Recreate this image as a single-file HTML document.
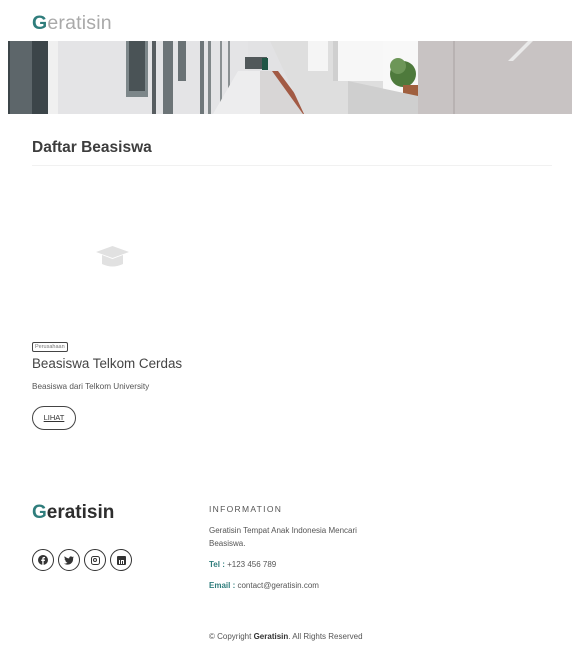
<!DOCTYPE html>
<html><head><style>
*{margin:0;padding:0;box-sizing:border-box}
body{width:584px;height:655px;background:#fff;font-family:"Liberation Sans",sans-serif;position:relative;overflow:hidden;color:#333}
.a{position:absolute}
.t{color:#2f7d7c}
</style></head><body>
<div class="a" style="left:32px;top:12px;font-size:19.5px;color:#a9a9a9;letter-spacing:0.2px"><span class="t" style="font-weight:bold">G</span>eratisin</div>
<div class="a" style="left:8px;top:41px;width:564px;height:73px;overflow:hidden;background:#dcdcdc">
 <svg width="564" height="73" viewBox="0 0 564 73">
  <rect width="564" height="73" fill="#e2e2e4"/>
  <rect x="0" y="0" width="40" height="73" fill="#3c4549"/>
  <rect x="2" y="0" width="22" height="73" fill="#5d666a"/>
  <rect x="40" y="0" width="10" height="73" fill="#f0f0f0"/>
  <rect x="50" y="0" width="190" height="73" fill="#e4e4e6"/>
  <rect x="118" y="0" width="22" height="56" fill="#7d878a"/>
  <rect x="121" y="0" width="16" height="50" fill="#4a5356"/>
  <rect x="144" y="0" width="4" height="73" fill="#575d60"/>
  <rect x="155" y="0" width="10" height="73" fill="#6c7477"/>
  <rect x="170" y="0" width="8" height="40" fill="#6a7275"/>
  <rect x="192" y="0" width="4" height="73" fill="#6e7679"/>
  <rect x="200" y="0" width="3" height="73" fill="#808789"/>
  <rect x="212" y="0" width="2" height="73" fill="#8a9092"/>
  <rect x="220" y="0" width="2" height="60" fill="#8a9092"/>
  <polygon points="230,30 252,30 252,73 205,73" fill="#ededee"/>
  <rect x="237" y="16" width="22" height="12" fill="#51585a"/>
  <rect x="254" y="17" width="6" height="12" fill="#1f5545"/>
  <polygon points="252,30 268,30 300,73 252,73" fill="#d8d6d6"/>
  <polygon points="264,30 270,30 302,73 295,73" fill="#a25a44"/>
  <polygon points="262,0 370,0 410,73 296,73" fill="#dedede"/>
  <rect x="300" y="0" width="20" height="30" fill="#f5f5f5"/>
  <rect x="330" y="0" width="45" height="40" fill="#f7f7f7"/>
  <rect x="325" y="0" width="5" height="40" fill="#cfcfcf"/>
  <rect x="375" y="0" width="35" height="55" fill="#f8f8f8"/>
  <circle cx="395" cy="33" r="13" fill="#4e7a3c"/>
  <circle cx="390" cy="25" r="8" fill="#6d9658"/>
  <rect x="395" y="44" width="15" height="12" fill="#a0603f"/>
  <polygon points="340,40 410,55 410,73 340,73" fill="#cfcfcf"/>
  <rect x="410" y="0" width="154" height="73" fill="#c8c3c3"/>
  <rect x="445" y="0" width="2" height="73" fill="#b8b2b2"/>
  <polygon points="500,20 520,0 525,0 505,20" fill="#eaeaea"/>
 </svg>
</div>
<div class="a" style="left:32px;top:139px;font-size:15.5px;font-weight:bold;color:#3d3d3d">Daftar Beasiswa</div>
<div class="a" style="left:32px;top:165px;width:520px;height:1px;background:#f1f1f1"></div>
<svg class="a" style="left:96px;top:246px" width="33" height="22" viewBox="0 0 33 22"><polygon points="16.5,0 33,6 16.5,12 0,6" fill="#e1e1e1"/><path d="M6 9 L6 18 Q16.5 23 27 18 L27 9 L16.5 13 Z" fill="#e1e1e1"/></svg>
<div class="a" style="left:32px;top:342px;border:1px solid #444;border-radius:2px;font-size:5.5px;padding:1px 2px;color:#777">Perusahaan</div>
<div class="a" style="left:32px;top:356px;font-size:13.4px;color:#444">Beasiswa Telkom Cerdas</div>
<div class="a" style="left:32px;top:382px;font-size:8.2px;color:#555">Beasiswa dari Telkom University</div>
<div class="a" style="left:32px;top:406px;width:44px;height:24px;border:1px solid #444;border-radius:12px;font-size:7.5px;text-align:center;line-height:22px;text-decoration:underline;color:#333">LIHAT</div>
<div class="a" style="left:32px;top:502px;font-size:19px;font-weight:bold;color:#2e2e2e"><span class="t">G</span>eratisin</div>
<div class="a" style="left:32px;top:549px;display:flex;gap:4px">
 <div style="width:22px;height:22px;border:1.3px solid #333;border-radius:50%;display:flex;align-items:center;justify-content:center"><svg width="10" height="10" viewBox="0 0 10 10"><circle cx="5" cy="5" r="5" fill="#333"/><path d="M5.6 10 V6 H6.8 L7 4.6 H5.6 V3.8 C5.6 3.4 5.8 3.2 6.2 3.2 H7 V2 H5.9 C4.8 2 4.3 2.6 4.3 3.6 V4.6 H3.2 V6 H4.3 V10 Z" fill="#fff"/></svg></div>
 <div style="width:22px;height:22px;border:1.3px solid #333;border-radius:50%;display:flex;align-items:center;justify-content:center"><svg width="10" height="9" viewBox="0 0 10 9"><path d="M10 1 L8.7 1.6 L9.7 0.4 L8.2 1 C7 -0.2 5 0.6 5.2 2.4 C3.3 2.3 1.8 1.4 0.7 0.2 C0.1 1.4 0.6 2.7 1.4 3.2 L0.6 3 C0.7 4.2 1.5 4.8 2.4 5.1 L1.5 5.1 C1.8 6 2.7 6.5 3.5 6.6 C2.5 7.4 1.2 7.8 0 7.6 C4.6 10.3 9.6 7.5 9.1 2 Z" fill="#333"/></svg></div>
 <div style="width:22px;height:22px;border:1.3px solid #333;border-radius:50%;display:flex;align-items:center;justify-content:center"><div style="width:9px;height:9px;border:1.3px solid #333;border-radius:2.5px;display:flex;align-items:center;justify-content:center"><div style="width:4px;height:4px;border:1px solid #333;border-radius:50%"></div></div></div>
 <div style="width:22px;height:22px;border:1.3px solid #333;border-radius:50%;display:flex;align-items:center;justify-content:center"><div style="width:9px;height:9px;background:#333;border-radius:1px;position:relative"><div style="position:absolute;left:2px;top:4px;width:1px;height:4px;background:#fff"></div><div style="position:absolute;left:4px;top:4px;width:3px;height:4px;border:1px solid #fff;border-bottom:none"></div></div></div>
</div>
<div class="a" style="left:209px;top:504px;font-size:8.5px;letter-spacing:1.3px;color:#555">INFORMATION</div>
<div class="a" style="left:209px;top:524px;font-size:8px;line-height:13px;color:#555;width:175px">Geratisin Tempat Anak Indonesia Mencari Beasiswa.</div>
<div class="a" style="left:209px;top:560px;font-size:8px;color:#555"><b class="t">Tel :</b> +123 456 789</div>
<div class="a" style="left:209px;top:581px;font-size:8px;color:#555"><b class="t">Email :</b> contact@geratisin.com</div>
<div class="a" style="left:209px;top:632px;font-size:8px;color:#555">© Copyright <b style="color:#333">Geratisin</b>. All Rights Reserved</div>
</body></html>
